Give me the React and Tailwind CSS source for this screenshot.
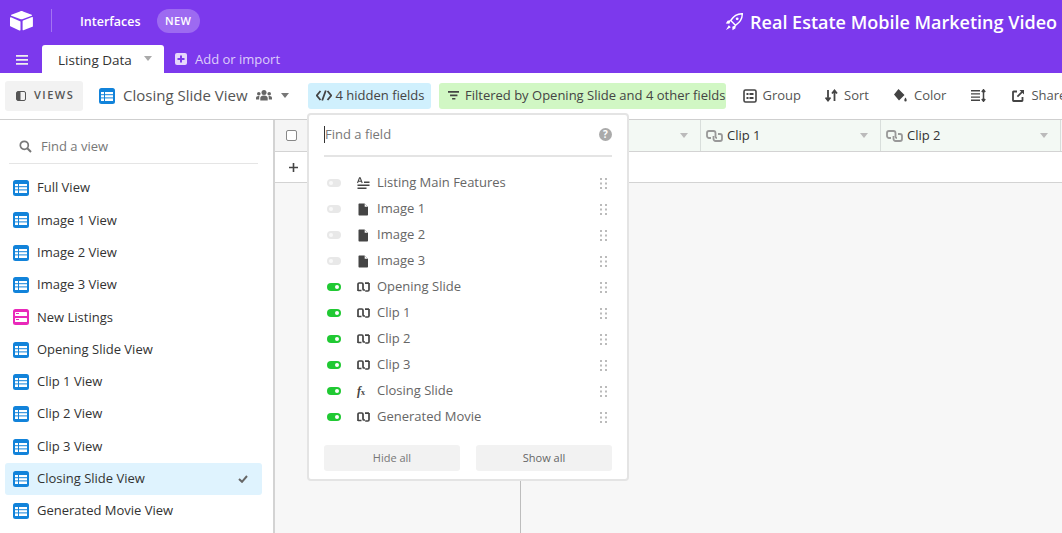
const font = { fontFamily: '"Open Sans","Noto Sans",sans-serif' };

function GridIcon({ color = '#1283da', size = 16 }) {
  return (
    <svg width={size} height={size} viewBox="0 0 16 16" className="shrink-0">
      <rect width="16" height="16" rx="2.5" fill={color} />
      <g fill="#fff">
        <rect x="2" y="4" width="3" height="2.2" /><rect x="6" y="4" width="8" height="2.2" />
        <rect x="2" y="7.2" width="3" height="2.2" /><rect x="6" y="7.2" width="8" height="2.2" />
        <rect x="2" y="10.4" width="3" height="2.6" /><rect x="6" y="10.4" width="8" height="2.6" />
      </g>
    </svg>
  );
}
function KanbanIcon() {
  return (
    <svg width="16" height="16" viewBox="0 0 16 16" className="shrink-0">
      <rect width="16" height="16" rx="2.5" fill="#e929ba" />
      <rect x="2" y="3" width="12" height="4" rx=".5" fill="#fff" />
      <rect x="2" y="9" width="12" height="4" rx=".5" fill="#fff" />
      <rect x="3" y="4" width="3" height="1" fill="#e929ba" />
      <rect x="3" y="10" width="3" height="1" fill="#e929ba" />
    </svg>
  );
}
function Caret({ className = '', color = '#999' }) {
  return (
    <svg width="8" height="5" viewBox="0 0 8 5" className={className}>
      <path d="M0 0h8L4 5z" fill={color} />
    </svg>
  );
}
function Logo() {
  return (
    <svg width="23" height="20" viewBox="0 0 23 20">
      <path d="M10 .4 1.3 3.7c-.5.2-.5.8 0 1l8.8 3.4c.9.3 1.9.3 2.8 0l8.8-3.4c.5-.2.5-.8 0-1L13 .4c-1-.4-2-.4-3 0z" fill="#fff" />
      <path d="M12.6 10.2v8.6c0 .4.4.7.8.5l9-3.5c.3-.1.5-.3.5-.6V6.6c0-.4-.4-.7-.8-.5l-9 3.5c-.3.1-.5.3-.5.6z" fill="#fff" />
      <path d="M10.5 10.6 1 6.2c-.4-.2-1 .1-1 .6v8c0 .2.1.4.3.5l9 4.2c.5.2 1.2-.1 1.2-.6z" fill="#fff" />
    </svg>
  );
}
function LinkField() {
  return (
    <svg width="13" height="10" viewBox="0 0 13 10" className="shrink-0">
      <path d="M1 9V2.2C1 1.5 1.5 1 2.2 1h2.6C5.5 1 6 1.5 6 2.2V7c0 .6.4 1 1 1h1M12 1v6.800c0 .7-.5 1.200-1.200 1.200H8.200" fill="none" stroke="#444" strokeWidth="1.700" />
      <path d="M1 8.500h3.500M8 1.100h4" fill="none" stroke="#444" strokeWidth="1.700" />
    </svg>
  );
}
function DocField() {
  return (
    <svg width="13" height="13" viewBox="0 0 13 13" className="shrink-0">
      <path d="M2.500.5h5l3.500 3.500v7.500c0 .6-.4 1-1 1h-7.500c-.6 0-1-.4-1-1v-10c0-.6.400-1 1-1z" fill="#444" />
      <path d="M7.700.8v3h3z" fill="#fff" />
    </svg>
  );
}
function TextField() {
  return (
    <svg width="13" height="13" viewBox="0 0 13 13" className="shrink-0">
      <path d="M.5 6 2.500.8h.7L5.200 6M1.400 4.300h3" fill="none" stroke="#444" strokeWidth="1.100" />
      <path d="M7 4.500h5.500v1.500H7zM.5 7.500h12V9H.5zM.5 10.500h9V12H.5z" fill="#444" />
    </svg>
  );
}
function HeaderLink() {
  return (
    <svg width="17" height="12" viewBox="0 0 17 12" className="shrink-0">
      <path d="M5 8H3C1.900 8 1 7.100 1 6V3c0-1.100.9-2 2-2h4.500c1.100 0 2 .9 2 2v3.500c0 1 .6 1.500 1.500 1.500" fill="none" stroke="#999" strokeWidth="1.800" />
      <path d="M12 4h2c1.100 0 2 .9 2 2v3c0 1.100-.9 2-2 2H9.500c-1.100 0-2-.9-2-2V6" fill="none" stroke="#999" strokeWidth="1.800" />
    </svg>
  );
}
function Toggle({ on }) {
  return (
    <span className={`relative block h-[8px] w-[14px] shrink-0 rounded-full ${on ? 'bg-[#20c933]' : 'bg-[#e8e8e8]'}`}>
      <span className={`absolute top-[2px] size-[4px] rounded-full ${on ? 'left-[8px] bg-white' : 'left-[2px] bg-[#f8f8f8]'}`} />
    </span>
  );
}
function Drag() {
  return (
    <svg width="7" height="11" viewBox="0 0 7 11" className="shrink-0">
      <g fill="#bbb">
        <rect x="0" y="0" width="2" height="2" /><rect x="5" y="0" width="2" height="2" />
        <rect x="0" y="4.500" width="2" height="2" /><rect x="5" y="4.500" width="2" height="2" />
        <rect x="0" y="9" width="2" height="2" /><rect x="5" y="9" width="2" height="2" />
      </g>
    </svg>
  );
}

const fields = [
  ['Listing Main Features', 'text', false], ['Image 1', 'doc', false], ['Image 2', 'doc', false], ['Image 3', 'doc', false],
  ['Opening Slide', 'link', true], ['Clip 1', 'link', true], ['Clip 2', 'link', true], ['Clip 3', 'link', true],
  ['Closing Slide', 'fx', true], ['Generated Movie', 'link', true],
];
const views = ['Full View', 'Image 1 View', 'Image 2 View', 'Image 3 View', 'New Listings', 'Opening Slide View', 'Clip 1 View', 'Clip 2 View', 'Clip 3 View', 'Closing Slide View', 'Generated Movie View'];

function FieldIcon({ kind }) {
  if (kind === 'text') return <TextField />;
  if (kind === 'doc') return <DocField />;
  if (kind === 'link') return <LinkField />;
  return <span className="w-[13px] shrink-0 text-[12px] leading-none font-bold text-[#444] italic" style={{ fontFamily: '"Liberation Serif",serif' }}>f<span className="text-[8px] not-italic">x</span></span>;
}

function TopBar() {
  return (
    <div className="h-[73px] shrink-0 bg-[#7c39ed] text-white">
      <div className="flex h-[45px] items-start">
        <div className="ml-[10px] mt-[11px]"><Logo /></div>
        <div className="ml-[18px] mt-[9px] h-[23px] w-px bg-white/30" />
        <span className="ml-[28px] mt-[13px] text-[12.5px] leading-[18px] font-semibold">Interfaces</span>
        <span className="ml-[16px] mt-[9px] flex h-[24px] w-[43px] items-center justify-center rounded-full bg-white/25 text-[11px] font-semibold tracking-[0.3px]">NEW</span>
        <div className="ml-auto mr-[5px] mt-[9px] flex items-center gap-[7px]">
          <svg width="18" height="18" viewBox="0 0 18 18">
            <path d="M17.300.7C12.500.600 8.800 2.700 5.700 7.500l4.800 4.800c4.800-3.100 6.900-6.800 6.800-11.600z" fill="none" stroke="#fff" strokeWidth="1.400" />
            <circle cx="12.200" cy="5.800" r="1.400" fill="#fff" />
            <path d="M6 7 2.500 7.700.8 10.500l3.500.2zM11 12l-.7 3.500-2.800 1.700-.2-3.500zM3.800 12.200 1 17l4.800-2.800z" fill="#fff" />
          </svg>
          <span className="text-[18px] leading-[26px] font-semibold whitespace-nowrap">Real Estate Mobile Marketing Video</span>
        </div>
      </div>
      <div className="flex h-[28px] items-start">
        <svg width="12" height="10" viewBox="0 0 12 10" className="ml-[16px] mt-[10px]">
          <path d="M0 0h12v1.800H0zM0 4h12v1.800H0zM0 8h12v1.800H0z" fill="#eee" />
        </svg>
        <div className="ml-[14px] flex h-[30px] w-[122px] items-center rounded-t-[3px] bg-white pl-[16px] text-[#333]">
          <span className="text-[13.500px] font-medium">Listing Data</span>
          <Caret className="ml-[12px] -mt-[4px]" color="#aaa" />
        </div>
        <svg width="12" height="12" viewBox="0 0 12 12" className="ml-[11px] mt-[8px]">
          <rect width="12" height="12" rx="2" fill="#e5d7fb" />
          <path d="M5 2.500h2V5h2.500v2H7v2.500H5V7H2.500V5H5z" fill="#7c39ed" />
        </svg>
        <span className="ml-[8px] mt-[5px] text-[13px] leading-[18px] text-white/75">Add or import</span>
      </div>
    </div>
  );
}

function ToolItem({ ml, icon, label, textMl = 'ml-[6px]' }) {
  return (
    <div className={`flex shrink-0 items-center text-[13px] text-[#555] ${ml}`}>
      {icon}
      {label && <span className={textMl}>{label}</span>}
    </div>
  );
}

function Toolbar() {
  return (
    <div className="flex h-[47px] shrink-0 items-center overflow-hidden border-b border-[#cfcfcf] bg-white pb-px">
      <div className="ml-[5px] flex h-[30px] w-[78px] shrink-0 items-center rounded-[3px] bg-[#f2f2f2] pl-[11px] text-[#555]">
        <svg width="10" height="10" viewBox="0 0 10 10"><rect x=".5" y=".5" width="9" height="9" rx="1.500" fill="none" stroke="#555" /><rect x="1" y="1" width="3.500" height="8" fill="#555" /></svg>
        <span className="ml-[8px] text-[11px] font-semibold tracking-[1.500px]">VIEWS</span>
      </div>
      <div className="ml-[16px] shrink-0"><GridIcon size={16} /></div>
      <span className="ml-[8px] shrink-0 text-[15px] font-medium whitespace-nowrap text-[#555]">Closing Slide View</span>
      <svg width="16" height="11" viewBox="0 0 16 11" className="ml-[8px] shrink-0">
        <g fill="#666"><circle cx="8" cy="2.500" r="2.500" /><circle cx="2.800" cy="3.800" r="1.800" /><circle cx="13.200" cy="3.800" r="1.800" />
          <path d="M4.300 10.500V8c0-1.700 1.300-2.600 3.700-2.600s3.700.9 3.700 2.600v2.500zM0 9.500V8c0-1.200.9-2 2.500-2 .5 0 .9.100 1 .2C3.200 6.800 3.200 7.500 3.200 9.500zM16 9.500V8c0-1.200-.9-2-2.500-2-.5 0-.9.100-1 .2.300.6.300 1.300.3 3.300z" /></g>
      </svg>
      <Caret className="ml-[9px] shrink-0" color="#777" />
      <div className="ml-[19px] flex h-[26px] w-[123px] shrink-0 items-center rounded-[3px] bg-[#d0f0fd] pl-[8px] text-[#444]">
        <svg width="16" height="11" viewBox="0 0 16 11"><path d="M4.500 1 .8 5.500 4.500 10M11.500 1l3.700 4.500L11.500 10M9.800.5 6.200 10.500" fill="none" stroke="#444" strokeWidth="1.800" /></svg>
        <span className="ml-[4px] text-[13px] font-medium whitespace-nowrap">4 hidden fields</span>
      </div>
      <div className="ml-[8px] flex h-[26px] w-[287px] shrink-0 items-center rounded-[3px] bg-[#d1f7c4] pl-[9px] text-[#444]">
        <svg width="14" height="11" viewBox="0 0 14 11"><path d="M0 0h14v2H0zM2.500 4.300h9v2h-9zM5 8.500h4v2H5z" fill="#444" /></svg>
        <span className="ml-[6px] text-[13px] font-medium whitespace-nowrap">Filtered by <span className="font-normal">Opening Slide and 4 other fields</span></span>
      </div>
      <ToolItem ml="ml-[17px]" label="Group" icon={
        <svg width="14" height="14" viewBox="0 0 14 14"><rect x="1" y="1" width="12" height="12" rx="1.500" fill="none" stroke="#444" strokeWidth="1.600" /><path d="M3.500 4h2v2h-2zM6.500 4h4v2h-4zM3.500 8h2v2h-2zM6.500 8h4v2h-4z" fill="#444" /></svg>} />
      <ToolItem ml="ml-[24px]" label="Sort" icon={
        <svg width="13" height="13" viewBox="0 0 13 13"><path d="M3 1v10M.5 8.500 3 11.500l2.500-3M9.500 12V2M7 4.500l2.500-3 2.500 3" fill="none" stroke="#444" strokeWidth="1.800" /></svg>} />
      <ToolItem ml="ml-[24px]" label="Color" icon={
        <svg width="15" height="15" viewBox="0 0 15 15"><path d="M5.500 1 1 6.500l5 6 5.500-5.500zM12.500 9.500c-.8 1.200-1.200 2-1.200 2.700a1.200 1.200 0 0 0 2.400 0c0-.7-.4-1.500-1.200-2.700z" fill="#444" /></svg>} />
      <ToolItem ml="ml-[25px]" icon={
        <svg width="15" height="13" viewBox="0 0 15 13"><path d="M0 1h9v1.400H0zM0 4.200h9v1.400H0zM0 7.400h9v1.400H0zM0 10.600h9V12H0z" fill="#444" /><path d="M12.500 1v11M10.800 3 12.500.8 14.200 3M10.800 10l1.700 2.200 1.700-2.200" fill="none" stroke="#444" strokeWidth="1.500" /></svg>} />
      <ToolItem ml="ml-[26px]" label="Share" textMl="ml-[7px]" icon={
        <svg width="12" height="12" viewBox="0 0 12 12"><path d="M5 1.500H1.500a.5.500 0 0 0-.5.500v8.500a.5.500 0 0 0 .5.500H10a.5.500 0 0 0 .5-.5V7" fill="none" stroke="#444" strokeWidth="1.800" /><path d="M7.500 0H12v4.500zM4.800 6l5-5 1.200 1.200-5 5z" fill="#444" /></svg>} />
    </div>
  );
}

function Sidebar() {
  return (
    <aside className="flex w-[275px] shrink-0 flex-col overflow-hidden border-r-2 border-[#d3d3d3] bg-white">
      <div className="mx-[9px] mt-[10px] flex h-[34px] w-[249px] shrink-0 items-center border-b border-[#e5e5e5] pl-[10px]">
        <svg width="13" height="13" viewBox="0 0 13 13"><circle cx="5.300" cy="5.300" r="4" fill="none" stroke="#777" strokeWidth="1.700" /><path d="M8.300 8.300 12 12" stroke="#777" strokeWidth="2" /></svg>
        <span className="ml-[9px] text-[13px] text-[#777]">Find a view</span>
      </div>
      <div className="mt-[8px] flex flex-col">
        {views.map((v) => {
          const sel = v === 'Closing Slide View';
          return (
            <div key={v} className={`mx-[5px] flex h-[32.300px] w-[257px] shrink-0 items-center rounded-[3px] pl-[8px] text-[13px] text-[#333] ${sel ? 'bg-[#dff3fe]' : ''}`}>
              {v === 'New Listings' ? <KanbanIcon /> : <GridIcon />}
              <span className="ml-[8px] whitespace-nowrap">{v}</span>
              {sel && (
                <svg width="10" height="8" viewBox="0 0 10 8" className="ml-auto mr-[14px]"><path d="M1 4l3 2.800L9 1" fill="none" stroke="#666" strokeWidth="2" /></svg>
              )}
            </div>
          );
        })}
      </div>
    </aside>
  );
}

function HeaderCell({ label, hidden }) {
  return (
    <div className="flex h-full w-[180px] shrink-0 items-center border-r border-[#d8dedb] bg-[#f3f9f4] pl-[5px] pr-[12px] text-[13px] text-[#333]">
      {!hidden && <HeaderLink />}
      {!hidden && <span className="ml-[4px]">{label}</span>}
      <Caret className="ml-auto" color="#bbb" />
    </div>
  );
}

function Grid() {
  return (
    <main className="flex min-w-0 flex-1 overflow-hidden bg-[#f7f7f7]">
      <div className="flex w-[246px] shrink-0 flex-col border-r border-[#bdbdbd]">
        <div className="flex h-[32px] shrink-0 items-center border-b border-[#d3d3d3] bg-[#f5f5f5] pl-[11px]">
          <span className="size-[11px] rounded-[2px] border border-[#888] bg-white" />
        </div>
        <div className="flex h-[31px] shrink-0 items-center border-b border-[#d3d3d3] bg-white pl-[14px]">
          <svg width="9" height="9" viewBox="0 0 9 9"><path d="M3.700 0h1.600v3.700H9v1.600H5.300V9H3.700V5.300H0V3.700h3.700z" fill="#444" /></svg>
        </div>
      </div>
      <div className="flex min-w-0 flex-1 flex-col">
        <div className="flex h-[32px] shrink-0 border-b border-[#d3d3d3]">
          <HeaderCell hidden />
          <HeaderCell label="Clip 1" />
          <HeaderCell label="Clip 2" />
        </div>
        <div className="h-[31px] shrink-0 border-b border-[#d3d3d3] bg-white" />
      </div>
    </main>
  );
}

function Popover() {
  return (
    <div className="absolute left-[307px] top-[113px] h-[368px] w-[322px] rounded-[4px] border-2 border-[#e4e4e4] bg-white px-[15px] text-[#666]">
      <div className="flex h-[42px] items-center border-b-2 border-[#e4e4e4] pb-[1px]">
        <span className="h-[17px] w-px bg-[#333]" />
        <span className="text-[13px] text-[#777]">Find a field</span>
        <svg width="13" height="13" viewBox="0 0 13 13" className="ml-auto">
          <circle cx="6.500" cy="6.500" r="6.500" fill="#aaa" />
          <text x="6.500" y="10" textAnchor="middle" fontSize="10" fontWeight="700" fill="#fff">?</text>
        </svg>
      </div>
      <div className="mt-[13px] flex flex-col">
        {fields.map(([name, kind, on]) => (
          <div key={name} className="flex h-[26px] items-center pl-[3px]">
            <Toggle on={on} />
            <span className="ml-[16px] flex w-[13px] shrink-0 justify-center"><FieldIcon kind={kind} /></span>
            <span className="ml-[7px] text-[13px] whitespace-nowrap text-[#666]">{name}</span>
            <span className="ml-auto mr-[5px]"><Drag /></span>
          </div>
        ))}
      </div>
      <div className="mt-[15px] flex justify-between">
        <div className="flex h-[26px] w-[136px] items-center justify-center rounded-[3px] bg-[#f2f2f2] text-[11px] text-[#777]">Hide all</div>
        <div className="flex h-[26px] w-[136px] items-center justify-center rounded-[3px] bg-[#f2f2f2] text-[11px] text-[#666]">Show all</div>
      </div>
    </div>
  );
}

export default function App() {
  return (
    <div className="relative flex h-[533px] w-[1062px] flex-col overflow-hidden bg-white" style={font}>
      <TopBar />
      <Toolbar />
      <div className="flex min-h-0 flex-1">
        <Sidebar />
        <Grid />
      </div>
      <Popover />
    </div>
  );
}
